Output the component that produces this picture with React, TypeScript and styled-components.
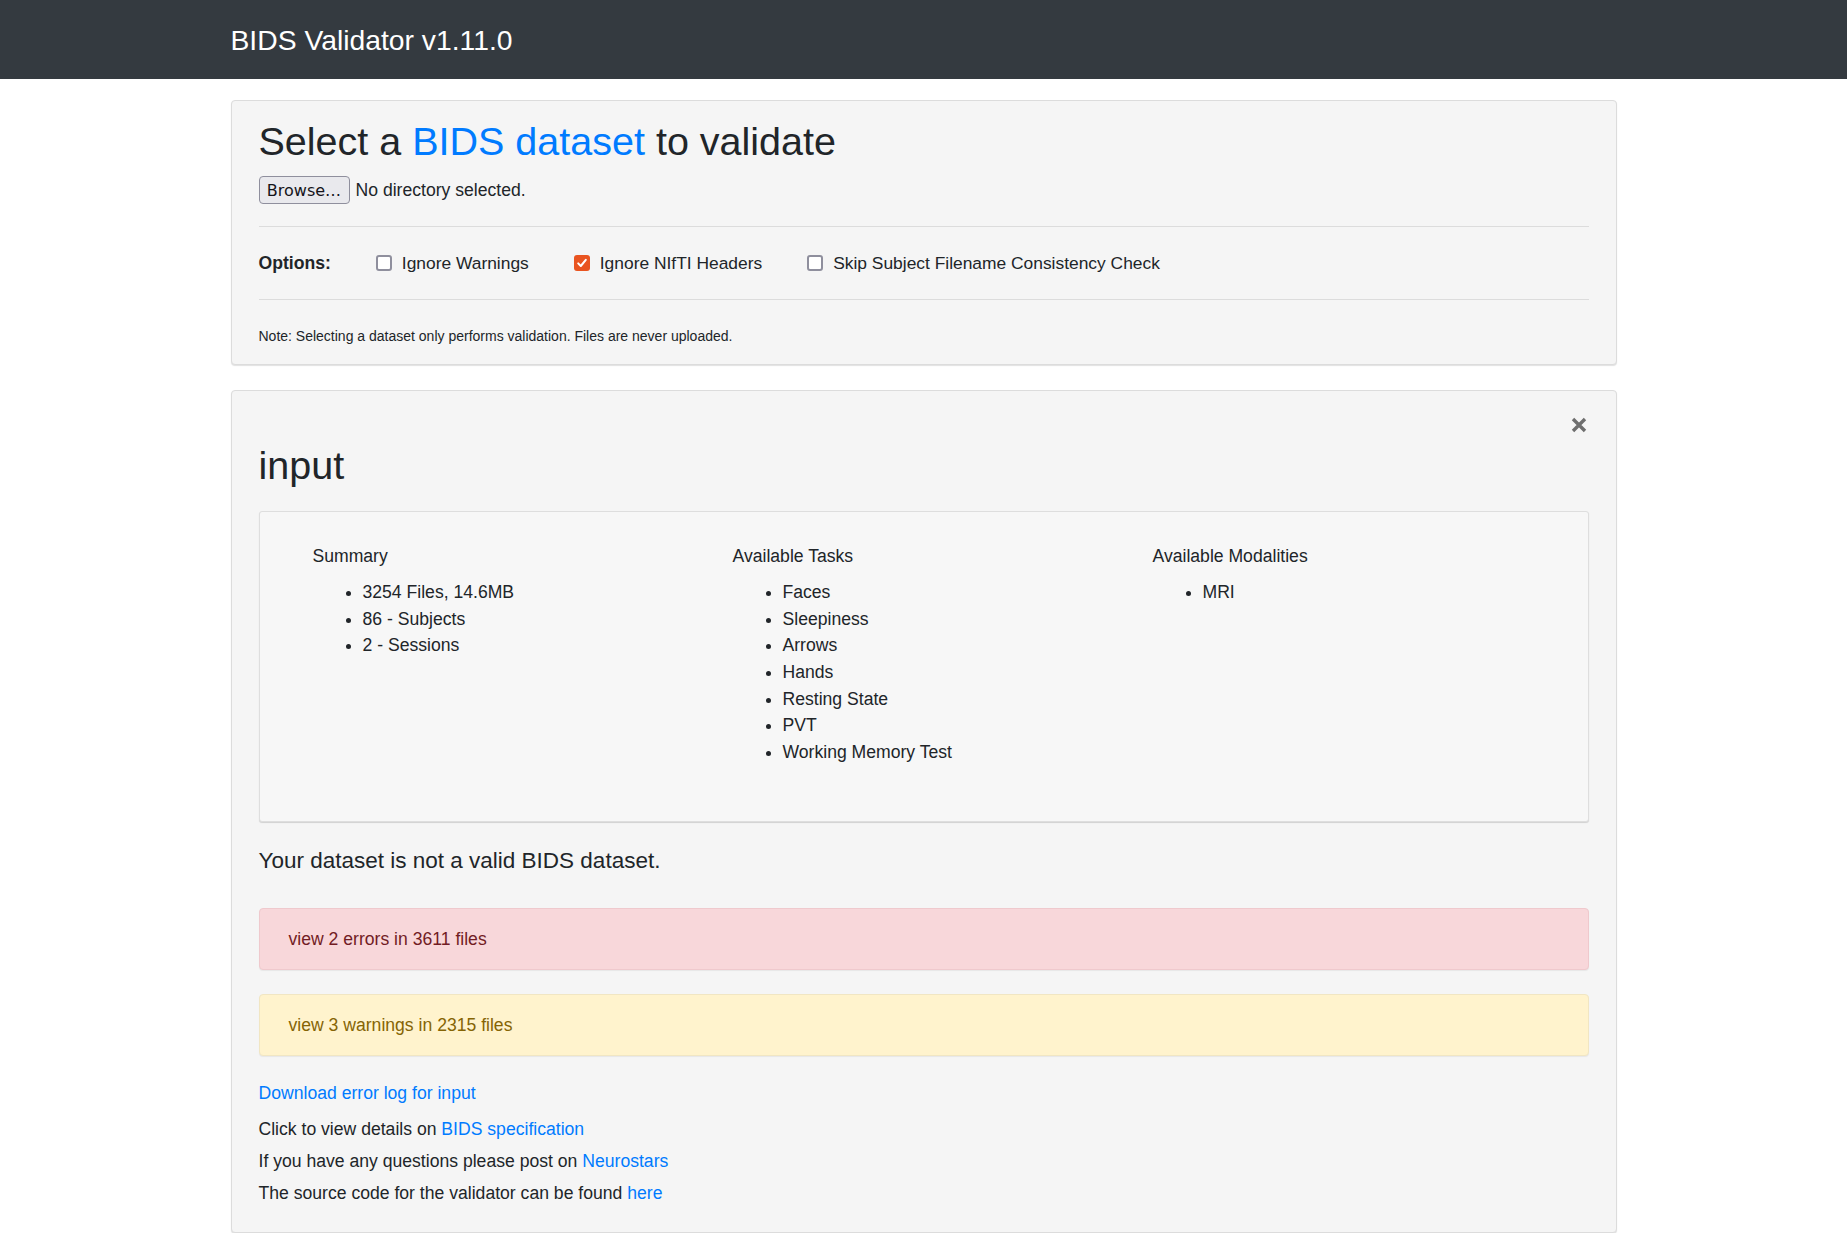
import React from "react";
import styled, { createGlobalStyle } from "styled-components";

const GlobalStyle = createGlobalStyle`
  html, body { margin: 0; padding: 0; background: #fff; }
  body {
    font-family: "Liberation Sans", Arial, sans-serif;
    font-size: 17.6px;
    line-height: 1.5;
    color: #212529;
  }
  * { box-sizing: border-box; }
`;

const Navbar = styled.header`
  height: 79px;
  background: #343a40;
  display: flex;
  align-items: center;
`;

const Inner = styled.div`
  width: 1386px;
  margin: 0 auto;
`;

const Brand = styled.div`
  color: #fff;
  font-size: 28.3px;
  line-height: 1;
  padding-top: 1px;
`;

const Main = styled.main`
  width: 1386px;
  margin: 0 auto;
  padding-top: 21px;
  display: flex;
  flex-direction: column;
  gap: 25px;
`;

const Card = styled.section<{ $pb: number }>`
  background: #f5f5f5;
  border: 1px solid #dcdcdc;
  border-radius: 4px;
  box-shadow: 0 1px 1px rgba(0, 0, 0, 0.12);
  padding: 17px 27px ${(p) => p.$pb}px 27px;
`;

const Title = styled.h1`
  margin: 0;
  font-size: 39.5px;
  line-height: 47.2px;
  font-weight: 400;
  color: #212529;
`;

const Link = styled.a`
  color: #007bff;
  text-decoration: none;
`;

const FileRow = styled.div`
  margin-top: 11px;
  height: 28px;
  display: flex;
  align-items: center;
  gap: 6px;
`;

const BrowseButton = styled.button`
  height: 28px;
  width: 91px;
  padding: 0;
  background: #e9e9ed;
  border: 1px solid #8f8f9d;
  border-radius: 4px;
  font-family: "DejaVu Sans", sans-serif;
  font-size: 16px;
  color: #15141a;
`;

const Divider = styled.hr<{ $mt: number }>`
  margin: ${(p) => p.$mt}px 0 0;
  border: 0;
  border-top: 1px solid #dcdcdc;
  height: 0;
`;

const OptionsRow = styled.div`
  height: 72px;
  display: flex;
  align-items: center;
  gap: 45px;
`;

const OptionsLabel = styled.strong`
  font-weight: 700;
`;

const Option = styled.label`
  display: flex;
  align-items: center;
  gap: 10px;
  font-size: 17.4px;
`;

const Box = styled.span<{ $checked: boolean }>`
  width: 16px;
  height: 16px;
  border-radius: 3px;
  display: inline-flex;
  align-items: center;
  justify-content: center;
  background: ${(p) => (p.$checked ? "#e95420" : "#fff")};
  border: ${(p) => (p.$checked ? "none" : "2px solid #8f8f9d")};
`;

const Note = styled.small`
  display: block;
  margin-top: 25.6px;
  font-size: 14px;
  line-height: 21px;
`;

const CloseRow = styled.div`
  height: 34px;
  padding-top: 9px;
  display: flex;
  justify-content: flex-end;
  padding-right: 2px;
`;

const SummaryBox = styled.div`
  margin-top: 22px;
  height: 311px;
  background: #f7f7f7;
  border: 1px solid #dedede;
  border-radius: 3px;
  box-shadow: 0 1px 1px rgba(0, 0, 0, 0.15);
  padding: 31px 15px 0 53px;
  display: grid;
  grid-template-columns: repeat(3, 420px);
  align-items: start;
`;

const ColHeading = styled.div`
  line-height: 26.7px;
`;

const List = styled.ul`
  margin: 8.8px 0 0;
  padding-left: 50px;
  line-height: 26.7px;
  list-style: disc;
`;

const Verdict = styled.h4`
  margin: 25px 0 0;
  font-size: 22.5px;
  line-height: 27px;
  font-weight: 400;
`;

const Alert = styled.div<{ $kind: "error" | "warning"; $mt: number }>`
  margin-top: ${(p) => p.$mt}px;
  padding: 17px 29px;
  line-height: 26.4px;
  border-radius: 4px;
  border: 1px solid ${(p) => (p.$kind === "error" ? "#efc9cd" : "#f1e6c3")};
  background: ${(p) => (p.$kind === "error" ? "#f8d7da" : "#fff3cd")};
  color: ${(p) => (p.$kind === "error" ? "#721c24" : "#856404")};
  box-shadow: 0 1px 1px rgba(0, 0, 0, 0.06);
`;

const InfoLine = styled.p<{ $mt: number }>`
  margin: ${(p) => p.$mt}px 0 0;
  line-height: 26.4px;
`;

const CheckIcon = () => (
  <svg width="12" height="12" viewBox="0 0 12 12">
    <path d="M2.2 6.4 L4.8 9 L9.8 2.8" fill="none" stroke="#fff" strokeWidth="2" strokeLinecap="round" strokeLinejoin="round" />
  </svg>
);

const CloseIcon = () => (
  <svg width="16" height="16" viewBox="0 0 16 16">
    <path d="M2 2 L14 14 M14 2 L2 14" stroke="#6e6e6e" strokeWidth="3.4" strokeLinecap="butt" />
  </svg>
);

const options = [
  { label: "Ignore Warnings", checked: false },
  { label: "Ignore NIfTI Headers", checked: true },
  { label: "Skip Subject Filename Consistency Check", checked: false },
];

const columns = [
  { title: "Summary", items: ["3254 Files, 14.6MB", "86 - Subjects", "2 - Sessions"] },
  {
    title: "Available Tasks",
    items: ["Faces", "Sleepiness", "Arrows", "Hands", "Resting State", "PVT", "Working Memory Test"],
  },
  { title: "Available Modalities", items: ["MRI"] },
];

export default function App() {
  return (
    <>
      <GlobalStyle />
      <Navbar>
        <Inner>
          <Brand>BIDS Validator v1.11.0</Brand>
        </Inner>
      </Navbar>
      <Main>
        <Card $pb={17.4}>
          <Title>
            Select a <Link href="#">BIDS dataset</Link> to validate
          </Title>
          <FileRow>
            <BrowseButton type="button">Browse…</BrowseButton>
            <span>No directory selected.</span>
          </FileRow>
          <Divider $mt={22} />
          <OptionsRow>
            <OptionsLabel>Options:</OptionsLabel>
            {options.map((o) => (
              <Option key={o.label}>
                <Box $checked={o.checked}>{o.checked && <CheckIcon />}</Box>
                {o.label}
              </Option>
            ))}
          </OptionsRow>
          <Divider $mt={0} />
          <Note>Note: Selecting a dataset only performs validation. Files are never uploaded.</Note>
        </Card>

        <Card $pb={25}>
          <CloseRow>
            <CloseIcon />
          </CloseRow>
          <Title>input</Title>
          <SummaryBox>
            {columns.map((c) => (
              <div key={c.title}>
                <ColHeading>{c.title}</ColHeading>
                <List>
                  {c.items.map((i) => (
                    <li key={i}>{i}</li>
                  ))}
                </List>
              </div>
            ))}
          </SummaryBox>
          <Verdict>Your dataset is not a valid BIDS dataset.</Verdict>
          <Alert $kind="error" $mt={33.5}>view 2 errors in 3611 files</Alert>
          <Alert $kind="warning" $mt={23.3}>view 3 warnings in 2315 files</Alert>
          <InfoLine $mt={23.9}>
            <Link href="#">Download error log for input</Link>
          </InfoLine>
          <InfoLine $mt={9.6}>
            Click to view details on <Link href="#">BIDS specification</Link>
          </InfoLine>
          <InfoLine $mt={5.5}>
            If you have any questions please post on <Link href="#">Neurostars</Link>
          </InfoLine>
          <InfoLine $mt={6}>
            The source code for the validator can be found <Link href="#">here</Link>
          </InfoLine>
        </Card>
      </Main>
    </>
  );
}
